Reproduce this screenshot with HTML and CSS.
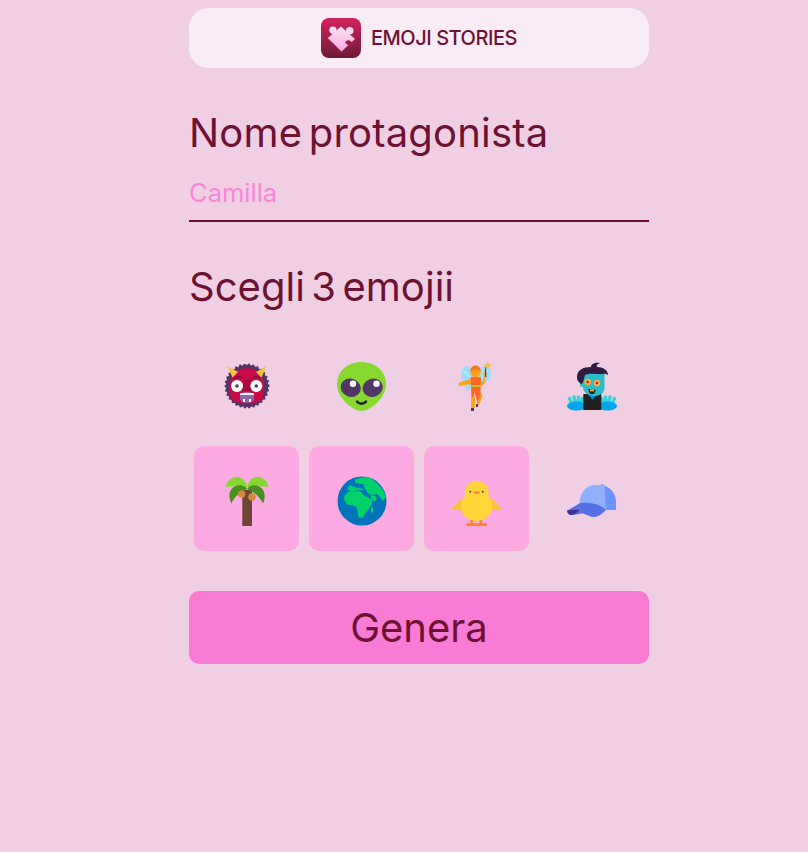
FILE: index.html
```html
<!DOCTYPE html>
<html>
<head>
  <title>Emoji Stories</title>
  <meta charset="UTF-8">
  <meta name="viewport" content="width=device-width, initial-scale=1.0">
  <link rel="stylesheet" href="styles.css">
</head>
<body>
  <main class="page">
    <header class="brand">
      <svg class="brand-logo" width="40" height="40" viewBox="0 0 40 40">
        <defs>
          <linearGradient id="logoBg" x1="0" y1="0" x2="0" y2="1">
            <stop offset="0" stop-color="#d4245e"/>
            <stop offset="1" stop-color="#6c1a36"/>
          </linearGradient>
          <linearGradient id="logoPiece" gradientUnits="userSpaceOnUse" x1="0" y1="8" x2="0" y2="34">
            <stop offset="0" stop-color="#ffe2f6"/>
            <stop offset="1" stop-color="#fba9df"/>
          </linearGradient>
        </defs>
        <rect width="40" height="40" rx="8" fill="url(#logoBg)"/>
        <g fill="url(#logoPiece)">
          <path d="M20 8.500 34 21 20.500 33.500 6.800 20Z"/>
          <circle cx="12" cy="12.200" r="3.700"/>
          <circle cx="28.700" cy="12.700" r="3.800"/>
        </g>
        <path d="M29.500 29.500 24 24.500A3.500 3.500 0 0 1 30 23.500L32 25Z" fill="#a01f4a"/>
      </svg>
      <span class="brand-name">EMOJI STORIES</span>
    </header>

    <form class="story-form">
      <label class="title" for="name">Nome protagonista</label>
      <input class="name-input" type="text" id="name" placeholder="Camilla">

      <h2 class="title title-pick">Scegli 3 emojii</h2>

      <div class="emoji-grid">
        <button type="button" class="emoji">
          <svg width="50" height="50" viewBox="0 0 50 50">
            <circle cx="25" cy="25" r="21.200" fill="#533566" stroke="#533566" stroke-width="2.600" stroke-linecap="round" stroke-dasharray="0 4.400"/>
            <path d="M8 24C8 13 15 7.300 25 7.300S41.700 13 41.700 24V33C41.700 39.500 35 42.700 25 42.700S8 39.500 8 33Z" fill="#ca0b4a"/>
            <path d="M5.500 5 16 11 10.500 16.500Z M44.500 5 34 11 39.500 16.500Z" fill="#f9c23c"/>
            <path d="M11 18C14 15.500 18 15.500 21 17.500M39 18C36 15.500 32 15.500 29 17.500" fill="none" stroke="#7d1238" stroke-width="1.500"/>
            <path d="M21.500 18H28.500L30 30H20Z" fill="#a8093e"/>
            <circle cx="15" cy="25" r="6" fill="#fff"/>
            <circle cx="34.300" cy="25" r="6" fill="#fff"/>
            <circle cx="15" cy="25" r="1.800" fill="#533566"/>
            <circle cx="34.300" cy="25" r="1.800" fill="#533566"/>
            <path d="M18 32.500C20 31.500 30 31.500 32 32.500V37C32 40.500 29 41.700 25 41.700S18 40.500 18 37Z" fill="#8a68b0"/>
            <path d="M18 32.500C20 31.500 30 31.500 32 32.500V34H18Z" fill="#fff"/>
            <rect x="21" y="38" width="2" height="3" fill="#fff"/>
            <rect x="27" y="38" width="2" height="3" fill="#fff"/>
          </svg>
        </button>
        <button type="button" class="emoji">
          <svg width="50" height="50" viewBox="0 0 50 50">
            <path d="M24.500 1C38 1 49 10 49 23.500 49 36 34 50 24.500 50S0 36 0 23.500C0 10 11 1 24.500 1Z" fill="#86d72f"/>
            <ellipse cx="13.700" cy="26.700" rx="10.200" ry="9" transform="rotate(20 13.700 26.700)" fill="#533566"/>
            <ellipse cx="35.700" cy="26.700" rx="10.200" ry="9" transform="rotate(-20 35.700 26.700)" fill="#533566"/>
            <circle cx="16" cy="22.800" r="3.200" fill="#fff"/>
            <circle cx="39.500" cy="22.800" r="3.200" fill="#fff"/>
            <path d="M20 40.500C22 43.500 27 43.500 29 40.500" fill="none" stroke="#212121" stroke-width="2.400" stroke-linecap="round"/>
          </svg>
        </button>
        <button type="button" class="emoji">
          <svg width="50" height="50" viewBox="0 0 50 50">
            <ellipse cx="14.500" cy="13" rx="5.500" ry="8" fill="#9fdcf8"/>
            <ellipse cx="16" cy="24" rx="3" ry="5.500" fill="#9fdcf8"/>
            <ellipse cx="33" cy="13" rx="6" ry="8" fill="#9fdcf8"/>
            <path d="M11 9 19 17M14 21 19 19M36 9 28 18" stroke="#d3eeff" stroke-width="1" fill="none"/>
            <path d="M18.500 16H29L28.500 31 30 36 26 44 24.500 37 22 31 22.500 41 22 48 19.500 48 19.500 37Z" fill="#ff6723"/>
            <rect x="18.500" y="24" width="10" height="2" fill="#b4c82d"/>
            <path d="M19 18 7 21.500 6.500 25 19 23Z" fill="#ffa21a"/>
            <path d="M29 25 32.500 23 34 11 32 10.500 31 20 28.500 21Z" fill="#ffa21a"/>
            <path d="M19.500 36H23L23 47H20Z M28 34H31L27 44 24.500 45Z" fill="#ffa21a"/>
            <rect x="19" y="47" width="3" height="3" fill="#533566"/>
            <rect x="24" y="43" width="2" height="3" fill="#533566"/>
            <circle cx="23.500" cy="11" r="5.200" fill="#ffa21a"/>
            <path d="M18.500 11C18 6 21 4.500 23.500 4.500S29 6 28.500 11C27 8 21 8 18.500 11Z" fill="#f37a1f"/>
            <rect x="33" y="6" width="1.300" height="10" fill="#533566"/>
            <path d="M35.700 .5 37 3 39.500 3.500 37.700 5.300 38 8 35.700 6.800 33.500 8 33.800 5.300 32 3.500 34.500 3Z" fill="#f9c23c"/>
          </svg>
        </button>
        <button type="button" class="emoji">
          <svg width="50" height="50" viewBox="0 0 50 50">
            <path d="M2.500 37.500 4.500 42M7 36 8.500 42M11.500 36 11.500 42M15.500 37.500 14 42M47.500 37.500 45.500 42M43 36 41.500 42M38.500 36 38.500 42M34.500 37.500 36 42" stroke="#3bd2d8" stroke-width="3.500" stroke-linecap="round"/>
            <ellipse cx="9.500" cy="45" rx="9.500" ry="4.500" fill="#00a6ed"/>
            <ellipse cx="40.500" cy="45" rx="9.500" ry="4.500" fill="#00a6ed"/>
            <rect x="16.300" y="33" width="18" height="16" fill="#212121"/>
            <path d="M21 33H30L25.500 39Z" fill="#0084ce"/>
            <path d="M16 12H37.500V27C37.500 32 33 35 27 35 21 35 16 31 16 26Z" fill="#2cbcc9"/>
            <rect x="13" y="20" width="4" height="6" rx="2" fill="#2cbcc9"/>
            <path d="M10 16C10 9 16 6 24 6 24 3 28 1 33 2 30 3 29 5 30 6 36 6 41 9 41 14 38 12 36 13 33 13 28 13 22 12 18 14 17 18 16 23 14 23 12 21 10 20 10 16Z" fill="#321b41"/>
            <circle cx="20.700" cy="21" r="3.300" fill="#ffb02e"/>
            <circle cx="30" cy="22" r="3.300" fill="#ffb02e"/>
            <circle cx="20.700" cy="21" r="1.300" fill="#ca0b4a"/>
            <circle cx="30" cy="22" r="1.300" fill="#ca0b4a"/>
            <path d="M21 28 29 29 27 33 23 33Z" fill="#212121"/>
            <rect x="23" y="28.500" width="4" height="1.800" fill="#ffb02e"/>
          </svg>
        </button>

        <button type="button" class="emoji emoji-selected">
          <svg width="50" height="50" viewBox="0 0 50 50">
            <rect x="20.300" y="14" width="9.700" height="36" fill="#6d4534"/>
            <path d="M3.700 11.300C5 4 11 .7 15 .7 20 .7 24 5 25.300 11.300 18 10 10 10 3.700 11.300Z" fill="#86d72f"/>
            <path d="M46.700 11.300C45.400 4 39.400 .7 35.400 .7 30.400 .7 26.500 5 25.300 11.300 32 10 40.500 10 46.700 11.300Z" fill="#86d72f"/>
            <path d="M25.300 13C22 8 13 8 9 14 6.500 18 7.500 23 9.500 27.500 12 21 19 15 25.300 13Z" fill="#44911b"/>
            <path d="M25.300 13C28 8 37 8 41 14 43.500 18 43 23 41 27.500 38 21 31 15 25.300 13Z" fill="#44911b"/>
            <circle cx="19.700" cy="18" r="3.800" fill="#d3883e"/>
            <circle cx="30" cy="21" r="3.800" fill="#d3883e"/>
          </svg>
        </button>
        <button type="button" class="emoji emoji-selected">
          <svg width="50" height="50" viewBox="0 0 50 50">
            <circle cx="25" cy="25" r="24.500" fill="#0074ba"/>
            <path d="M7.300 20 11.700 15.500 23 15 28 20 35 23.500 35 28 30 35 25 41.700 21.700 41.700 20 32 17 29.500 10 28.500 7.300 24Z" fill="#00d26a"/>
            <path d="M18 3.500 27 1 33 1.700 40 7 46 14 49 21 46 25 43 21 40 18 35 19 31 17.500 29 14 26 8 21 7.500 18 6Z" fill="#00d26a"/>
            <path d="M10 13.300 12.700 9.300 16.700 10.700 20 11.700 28.300 13.300 20 14.500 14 15Z" fill="#00d26a"/>
            <path d="M33 19 38 20 40 23 37 26 34 22Z" fill="#00d26a"/>
            <path d="M34 32 36 31 36 36 34 37Z" fill="#00d26a"/>
          </svg>
        </button>
        <button type="button" class="emoji emoji-selected">
          <svg width="50" height="50" viewBox="0 0 50 50">
            <path d="M9.700 22 -.3 32.300C0 34 5 34.500 10 34Z" fill="#f9c23c"/>
            <path d="M39.700 22 49.700 32.300C49 34 44.500 34.500 39.700 34Z" fill="#f9c23c"/>
            <rect x="18.500" y="42" width="2.500" height="6" fill="#ff822d"/>
            <rect x="27.500" y="42" width="2.500" height="6" fill="#ff822d"/>
            <rect x="14" y="47.300" width="21" height="2.700" rx="1.300" fill="#ff822d"/>
            <ellipse cx="24.700" cy="30" rx="15.800" ry="15" fill="#ffd638"/>
            <circle cx="24.700" cy="17" r="12" fill="#ffd638"/>
            <path d="M21.300 15.500H28C28 17 26.500 18 24.700 18S21.500 17 21.300 15.500Z" fill="#ff822d"/>
            <circle cx="18.300" cy="15.700" r="1" fill="#533566"/>
            <circle cx="30.700" cy="15.700" r="1" fill="#533566"/>
          </svg>
        </button>
        <button type="button" class="emoji">
          <svg width="50" height="50" viewBox="0 0 50 50">
            <path d="M33 9 35.300 8 38 10C44 12 49 18 49 26V33C49 34 48 34 47 34H36Z" fill="#6e93ff"/>
            <path d="M12.300 30C12.300 17 19 9 28 9H37.500L39 34H12.300Z" fill="#8fb0ff"/>
            <path d="M0 34.700 12.300 27.400C18 26 32 27 39 33.800 34 39 30 41.500 26 41 21 40 18 37 14 37.500 10 38 6 39.500 3 39 1 38 0 36 0 34.700Z" fill="#5570e4"/>
            <path d="M0 34.700C3 34 8 33.500 12.500 34 11 36 8 38 5 39 3 39.500 0 37 0 34.700Z" fill="#3f2f94"/>
          </svg>
        </button>
      </div>

      <button type="submit" class="generate">Genera</button>
    </form>
  </main>
</body>
</html>
```

FILE: styles.css
```css
* {
  box-sizing: border-box;
}
body {
  margin: 0;
  min-height: 852px;
  background: #f0cfe5;
  color: #6e1233;
  font-family: Inter, "Liberation Sans", sans-serif;
  overflow: hidden;
}
.page {
  width: 460px;
  margin-left: 189px;
  padding-top: 8px;
}
.brand {
  display: flex;
  align-items: center;
  justify-content: center;
  gap: 10px;
  height: 60px;
  background: #f9ecf7;
  border-radius: 20px;
}
.brand-logo {
  display: block;
}
.brand-name {
  font-size: 20px;
  font-weight: 500;
  letter-spacing: -0.45px;
}
.story-form {
  display: flex;
  flex-direction: column;
  padding-top: 41px;
}
.title {
  display: block;
  margin: 0;
  font-size: 40px;
  font-weight: 400;
  line-height: 48px;
  letter-spacing: 0.2px;
  word-spacing: -5px;
}
.name-input {
  height: 50px;
  margin-top: 15px;
  padding: 0 0 8px;
  border: 0;
  border-bottom: 2px solid #6e1233;
  border-radius: 0;
  background: transparent;
  color: #6e1233;
  font: inherit;
  font-size: 25.5px;
  outline: none;
}
.name-input::placeholder {
  color: #fd85d8;
  opacity: 1;
}
.title-pick {
  margin-top: 41px;
  letter-spacing: 0.05px;
}
.emoji-grid {
  display: grid;
  grid-template-columns: repeat(4, 105px);
  gap: 10px;
  padding: 5px;
  margin-top: 15px;
}
.emoji {
  display: flex;
  align-items: center;
  justify-content: center;
  height: 105px;
  padding: 5px 0 0;
  border: 0;
  border-radius: 10px;
  background: transparent;
}
.emoji-selected {
  background: #fcaae1;
}
.generate {
  height: 73px;
  margin-top: 35px;
  border: 0;
  border-radius: 10px;
  background: #f97bd3;
  color: #6e1233;
  font: inherit;
  font-size: 40px;
}
```
